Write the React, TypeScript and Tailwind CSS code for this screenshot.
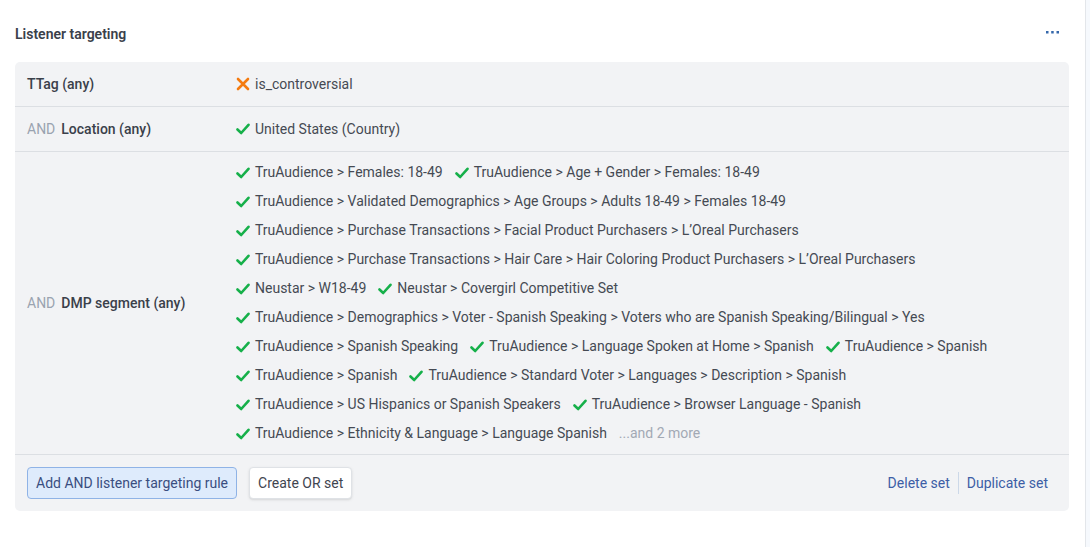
import React from "react"

const CheckIcon = () => (
  <svg width="14" height="12" viewBox="0 0 14 12" className="shrink-0">
    <path d="M1.5 6.5 L5.2 10 L12.5 1.8" fill="none" stroke="#16b04a" strokeWidth="2.6" strokeLinecap="round" strokeLinejoin="round" />
  </svg>
)

const CrossIcon = () => (
  <svg width="14" height="14" viewBox="0 0 14 14" className="shrink-0">
    <path d="M2 2 L12 12 M12 2 L2 12" fill="none" stroke="#f47b10" strokeWidth="2.6" strokeLinecap="round" />
  </svg>
)

const Item = ({ text, bad }: { text: string; bad?: boolean }) => (
  <span className="flex items-center gap-[5px] whitespace-nowrap">
    {bad ? <CrossIcon /> : <CheckIcon />}
    <span>{text}</span>
  </span>
)

const dmpLines: string[][] = [
  ["TruAudience > Females: 18-49", "TruAudience > Age + Gender > Females: 18-49"],
  ["TruAudience > Validated Demographics > Age Groups > Adults 18-49 > Females 18-49"],
  ["TruAudience > Purchase Transactions > Facial Product Purchasers > L’Oreal Purchasers"],
  ["TruAudience > Purchase Transactions > Hair Care > Hair Coloring Product Purchasers > L’Oreal Purchasers"],
  ["Neustar > W18-49", "Neustar > Covergirl Competitive Set"],
  ["TruAudience > Demographics > Voter - Spanish Speaking > Voters who are Spanish Speaking/Bilingual > Yes"],
  ["TruAudience > Spanish Speaking", "TruAudience > Language Spoken at Home > Spanish", "TruAudience > Spanish"],
  ["TruAudience > Spanish", "TruAudience > Standard Voter > Languages > Description > Spanish"],
  ["TruAudience > US Hispanics or Spanish Speakers", "TruAudience > Browser Language - Spanish"],
  ["TruAudience > Ethnicity & Language > Language Spanish"],
]

export default function App() {
  return (
    <div className="flex w-[1090px] h-[547px] bg-[#f6f9fd] font-['Roboto',sans-serif] text-[14px] text-[#454a53]">
      <div className="w-[1086px] h-full bg-white border-r border-[#e3e6ea] pl-[15px] pr-[16px] pt-[24px]">
        <div className="flex items-center justify-between mb-[18px] h-5">
          <h2 className="text-[14px] font-semibold text-[#3a404a] leading-5">Listener targeting</h2>
          <svg width="13" height="3" viewBox="0 0 13 3" className="mr-[10px] -mt-[3px]">
            <rect x="0" y="0" width="2.5" height="2.5" fill="#3568ab" />
            <rect x="5.2" y="0" width="2.5" height="2.5" fill="#3568ab" />
            <rect x="10.5" y="0" width="2.5" height="2.5" fill="#3568ab" />
          </svg>
        </div>

        <div className="bg-[#f2f3f5] rounded-[5px]">
          <div className="flex px-3 py-2 leading-[28px] border-b border-[#dcdfe3]">
            <div className="w-[209px] shrink-0 font-medium text-[#3a404a]">TTag (any)</div>
            <Item text="is_controversial" bad />
          </div>
          <div className="flex px-3 py-2 leading-[28px] border-b border-[#dcdfe3]">
            <div className="w-[209px] shrink-0">
              <span className="text-[#9aa3b0] mr-[6px]">AND</span>
              <span className="font-medium text-[#3a404a]">Location (any)</span>
            </div>
            <Item text="United States (Country)" />
          </div>
          <div className="flex items-center px-3 py-[6px] leading-[29px] border-b border-[#dcdfe3]">
            <div className="w-[209px] shrink-0">
              <span className="text-[#9aa3b0] mr-[6px]">AND</span>
              <span className="font-medium text-[#3a404a]">DMP segment (any)</span>
            </div>
            <div className="flex flex-col">
              {dmpLines.map((line, i) => (
                <div key={i} className="flex gap-3">
                  {line.map((t, j) => (
                    <Item key={j} text={t} />
                  ))}
                  {i === dmpLines.length - 1 && <span className="text-[#a2a9b4]">...and 2 more</span>}
                </div>
              ))}
            </div>
          </div>
          <div className="flex items-center justify-between px-3 py-3">
            <div className="flex gap-3">
              <button className="h-8 px-2 rounded-[4px] border border-[#8fb3e6] bg-[#deebfc] text-[#3a4e80]">
                Add AND listener targeting rule
              </button>
              <button className="h-8 px-2 rounded-[4px] border border-[#dfe2e6] bg-white text-[#3f4550] shadow-sm">
                Create OR set
              </button>
            </div>
            <div className="flex items-center text-[#3d5ea6]">
              <span className="px-2">Delete set</span>
              <span className="w-px h-[22px] bg-[#ccd8e8]" />
              <span className="pl-2 pr-[9px]">Duplicate set</span>
            </div>
          </div>
        </div>
      </div>
    </div>
  )
}
